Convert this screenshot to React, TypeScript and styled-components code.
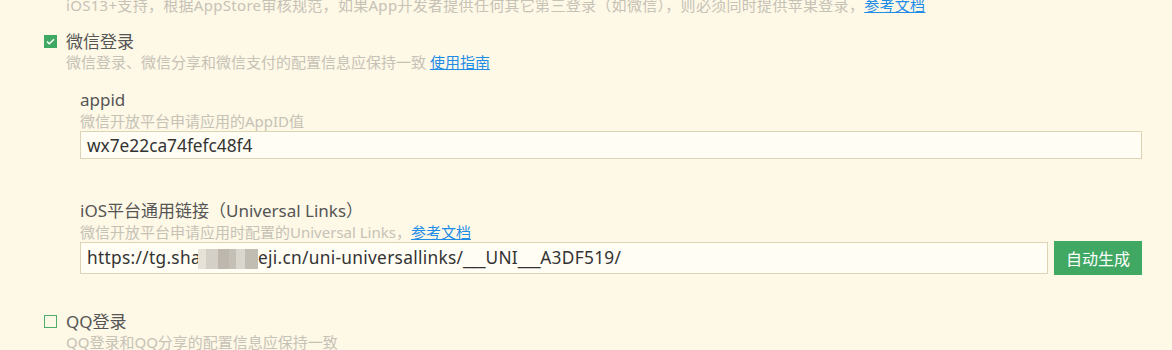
import React from "react";
import styled, { createGlobalStyle } from "styled-components";

const Global = createGlobalStyle`
  html, body { margin: 0; padding: 0; background: #fef8e6; }
  body {
    font-family: "Noto Sans", "Noto Sans CJK SC", sans-serif;
    color: #555;
    overflow: hidden;
  }
`;

const Page = styled.div`
  width: 1172px;
  height: 350px;
  box-sizing: border-box;
  padding: 0 30px 0 44px;
  overflow: hidden;
  background: #fef8e6;
`;

const Desc = styled.div<{ $indent?: number }>`
  font-size: 15px;
  line-height: 20px;
  color: #c6c2b6;
  padding-left: ${(p) => p.$indent ?? 0}px;
  white-space: nowrap;
`;

const TopDesc = styled(Desc)`
  margin-top: -5px;
  letter-spacing: 0.3px;
`;

const Link = styled.a`
  color: #1f8ce6;
  text-decoration: underline;
  cursor: pointer;
`;

const Section = styled.div<{ $gap: number }>`
  margin-top: ${(p) => p.$gap}px;
`;

const TitleRow = styled.label`
  display: flex;
  align-items: center;
  gap: 9px;
  height: 20px;
`;

const Checkbox = styled.span<{ $checked?: boolean }>`
  width: 13px;
  height: 13px;
  box-sizing: border-box;
  flex: none;
  margin-top: -2px;
  display: flex;
  align-items: center;
  justify-content: center;
  background: ${(p) => (p.$checked ? "#3fa862" : "transparent")};
  border: 1px solid ${(p) => (p.$checked ? "#3fa862" : "#4fae6c")};
`;

const Title = styled.span`
  font-size: 17px;
  line-height: 20px;
  color: #555;
`;

const Fields = styled.div`
  padding-left: 36px;
  margin-top: 17px;
  display: flex;
  flex-direction: column;
  gap: 41px;
`;

const Field = styled.div`
  display: flex;
  flex-direction: column;
`;

const Label = styled.div`
  font-size: 17px;
  line-height: 22px;
  color: #555;
`;

const InputRow = styled.div`
  display: flex;
  gap: 6px;
`;

const InputBox = styled.div<{ $h: number }>`
  flex: 1;
  height: ${(p) => p.$h}px;
  box-sizing: border-box;
  border: 1px solid #ddd4b6;
  background: #fffdf4;
  padding-left: 6px;
  display: flex;
  align-items: center;
  font-size: 17.3px;
  color: #333;
  white-space: nowrap;
  overflow: hidden;
`;

const UrlText = styled.span`
  white-space: pre;
  line-height: 22px;
  letter-spacing: 0.3px;
`;

const Under = styled.span`
  font-family: "Liberation Sans", sans-serif;
  font-size: 20px;
  line-height: 0;
  letter-spacing: 0;
`;

const Mosaic = styled.span`
  display: inline-block;
  vertical-align: middle;
  width: 60px;
  height: 20px;
  margin: 0 0 0 -3px;
  background: linear-gradient(
    90deg,
    #e6e2d8 0 8px,
    #d4d0c8 8px 20px,
    #bdb7ad 20px 31px,
    #c5c0b6 31px 38px,
    #d9d6ce 38px 47px,
    #c2bdb3 47px 60px
  );
`;

const Button = styled.button`
  width: 88px;
  height: 34px;
  margin-top: -1px;
  border: none;
  background: #40a862;
  color: #fff;
  font-family: inherit;
  font-size: 16px;
  padding: 0;
  cursor: pointer;
`;

const Check = () => (
  <svg width="9" height="7" viewBox="0 0 9 7">
    <path d="M1 3.6 L3.4 5.8 L8 1.2" fill="none" stroke="#fff" strokeWidth="1.5" />
  </svg>
);

export default function App() {
  return (
    <Page>
      <Global />
      <TopDesc $indent={22}>
        iOS13+支持，根据AppStore审核规范，如果App开发者提供任何其它第三登录（如微信），则必须同时提供苹果登录，<Link>参考文档</Link>
      </TopDesc>

      <Section $gap={17}>
        <TitleRow>
          <Checkbox $checked>
            <Check />
          </Checkbox>
          <Title>微信登录</Title>
        </TitleRow>
        <Desc $indent={22}>
          微信登录、微信分享和微信支付的配置信息应保持一致 <Link>使用指南</Link>
        </Desc>
        <Fields>
          <Field>
            <Label>appid</Label>
            <Desc>微信开放平台申请应用的AppID值</Desc>
            <InputRow>
              <InputBox $h={28}>wx7e22ca74fefc48f4</InputBox>
            </InputRow>
          </Field>
          <Field>
            <Label>iOS平台通用链接（Universal Links）</Label>
            <Desc>
              微信开放平台申请应用时配置的Universal Links，<Link>参考文档</Link>
            </Desc>
            <InputRow>
              <InputBox $h={32}>
                <UrlText>
                  {"https://tg.sha"}
                  <Mosaic aria-hidden="true" />
                  {"eji.cn/uni-universallinks/"}
                  <Under>__</Under>
                  {"UNI"}
                  <Under>__</Under>
                  {"A3DF519/"}
                </UrlText>
              </InputBox>
              <Button>自动生成</Button>
            </InputRow>
          </Field>
        </Fields>
      </Section>

      <Section $gap={37}>
        <TitleRow>
          <Checkbox />
          <Title>QQ登录</Title>
        </TitleRow>
        <Desc $indent={22}>QQ登录和QQ分享的配置信息应保持一致</Desc>
      </Section>
    </Page>
  );
}
